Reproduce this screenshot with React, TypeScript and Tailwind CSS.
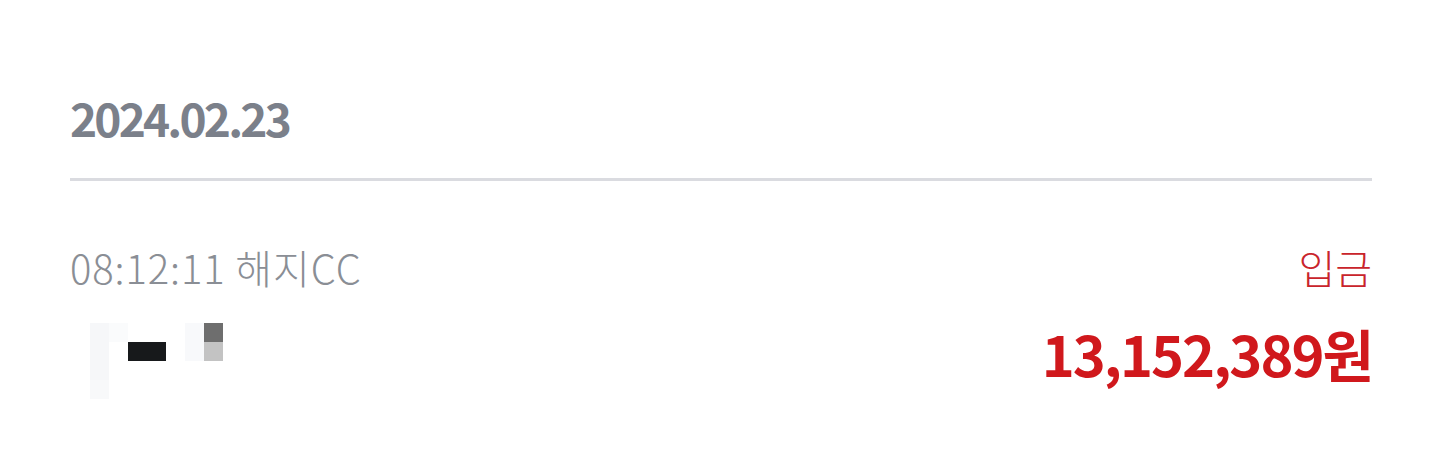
import React from 'react'

const font = { fontFamily: '"Noto Sans CJK KR", "Noto Sans", sans-serif' }

// pixelated redaction block, 19px cells
const mosaic: string[][] = [
  ['bg-[#f6f7f9]', 'bg-[#fafbfc]', 'bg-white', 'bg-white', 'bg-white', 'bg-[#f8f9fb]', 'bg-[#6e6e6e]'],
  ['bg-[#f6f7f9]', 'bg-white', 'bg-[#17191b]', 'bg-[#17191b]', 'bg-white', 'bg-[#f8f9fb]', 'bg-[#c3c3c3]'],
  ['bg-[#f6f7f9]', 'bg-white', 'bg-white', 'bg-white', 'bg-white', 'bg-white', 'bg-white'],
  ['bg-[#f8f9fa]', 'bg-white', 'bg-white', 'bg-white', 'bg-white', 'bg-white', 'bg-white'],
]

const App: React.FC = () => {
  return (
    <div className="w-[1440px] h-[464px] bg-white pl-[70px] pr-[68px]" style={font}>
      <div className="pt-[94px] text-[46px] leading-[46px] font-bold tracking-[-2.8px] text-[#7b808a]">
        2024.02.23
      </div>

      <div className="mt-[38px] h-[3px] bg-[#dadbe0]" />

      <div className="mt-[66px] flex items-start justify-between">
        <div className="text-[40px] leading-[40px] font-light tracking-[0.9px] text-[#8a8e95]">
          08:12:11 해지CC
        </div>
        <div className="text-[40px] leading-[40px] font-light text-[#c9242b]">입금</div>
      </div>

      <div className="mt-[36px] flex items-start justify-between">
        <div className="ml-[20px] grid grid-cols-[repeat(7,19px)] grid-rows-[repeat(4,19px)]">
          {mosaic.flat().map((c, i) => (
            <div key={i} className={c} />
          ))}
        </div>
        <div className="mt-[2px] text-[56px] leading-[56px] font-bold tracking-[-2px] text-[#d0181c]">
          13,152,389원
        </div>
      </div>
    </div>
  )
}

export default App
